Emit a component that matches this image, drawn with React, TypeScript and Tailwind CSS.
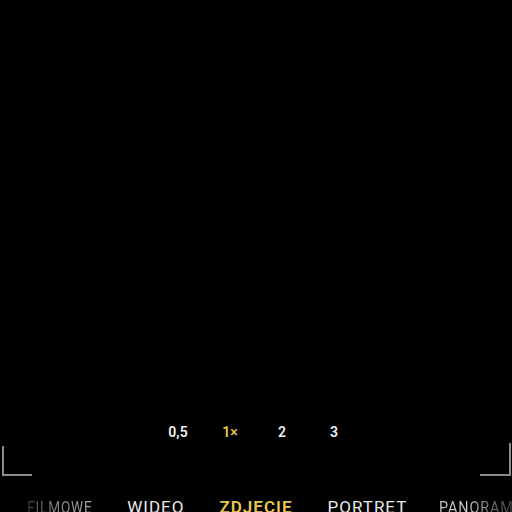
const zooms = ['0,5', '1×', '2', '3']

function App() {
  return (
    <div
      className="w-[512px] h-[512px] overflow-hidden bg-black flex flex-col select-none"
      style={{ fontFamily: 'Roboto, "Noto Sans", sans-serif' }}
    >
      {/* viewfinder */}
      <div className="h-[422px] shrink-0" />

      {/* zoom levels */}
      <div className="h-5 flex justify-center items-center text-[14px] leading-5 font-semibold">
        {zooms.map((z) => (
          <div
            key={z}
            className={`w-[52px] text-center ${z === '1×' ? 'text-[#ecc94b]' : 'text-[#f2f2f2]'}`}
          >
            {z}
          </div>
        ))}
      </div>

      {/* frame corners */}
      <div className="mt-[3px] h-[31px] flex justify-between">
        <div className="ml-[2px] w-[30px] h-[30px] mt-[1px] border-l-2 border-b-2 border-[#8a8a8a]" />
        <div className="mr-[1px] w-[31px] h-[33px] -mt-[2px] border-r-2 border-b-2 border-[#8a8a8a]" />
      </div>

      {/* modes */}
      <div className="mt-[21px] grid grid-cols-[1fr_auto_1fr] text-[17px] leading-5 tracking-[1px] whitespace-nowrap">
        <div className="flex justify-end gap-[35px] pr-[35px] overflow-hidden">
          <span className="scale-x-[0.8] origin-right bg-gradient-to-r from-[#3a3a3a] via-[#7a7a7a] via-35% to-[#b0b0b0] bg-clip-text text-transparent">
            FILMOWE
          </span>
          <span className="text-[#e8e8e8]">WIDEO</span>
        </div>
        <span className="text-[#ecc94b] font-semibold">ZDJĘCIE</span>
        <div className="flex justify-start gap-[32px] pl-[35px] overflow-hidden">
          <span className="text-[#e8e8e8]">PORTRET</span>
          <span className="scale-x-[0.85] origin-left bg-gradient-to-r from-[#c8c8c8] from-35% via-[#707070] via-60% to-[#2a2a2a] bg-clip-text text-transparent">
            PANORAMA
          </span>
        </div>
      </div>
    </div>
  )
}

export default App
